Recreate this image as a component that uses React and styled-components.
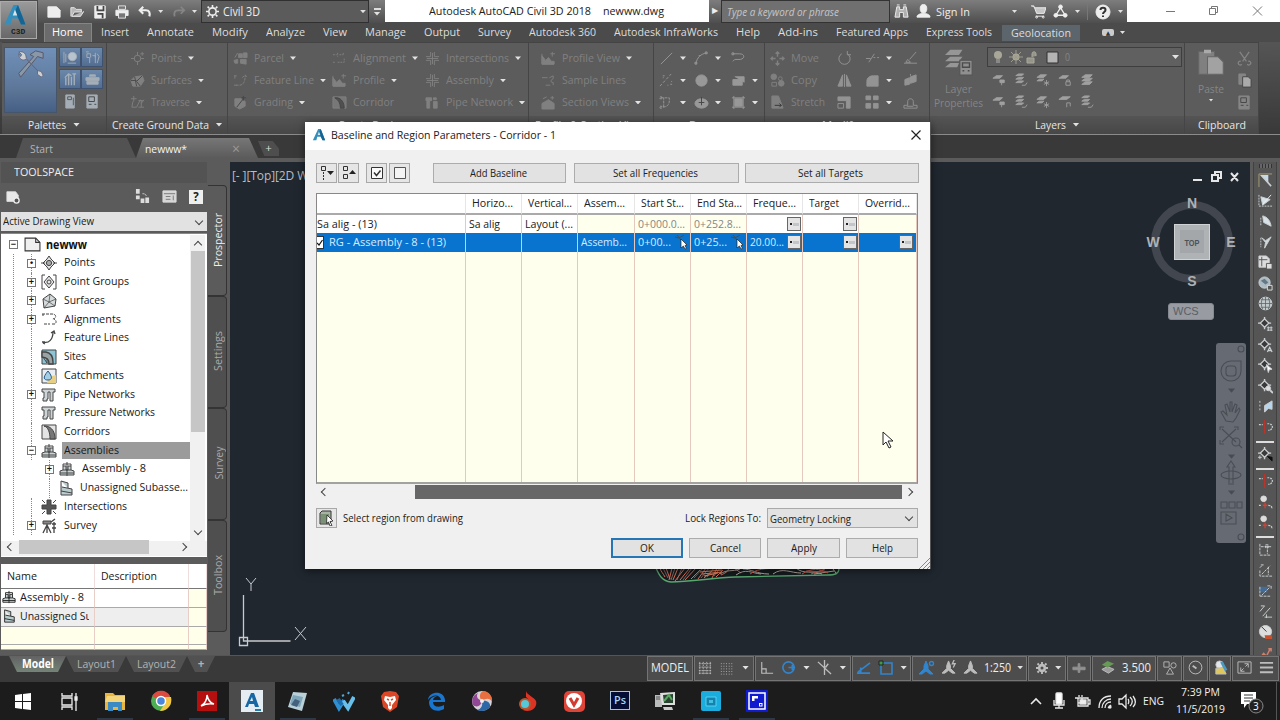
import React, { useLayoutEffect, useRef } from "react";
import styled, { createGlobalStyle, css } from "styled-components";

/* Label squeezes its text into a set width, since the UI font is narrower than Open Sans */
const Label = ({ w, children, ...rest }) => {
  const ref = useRef(null);
  useLayoutEffect(() => {
    const el = ref.current;
    el.style.transform = `scaleX(${w / parseFloat(getComputedStyle(el).width)})`;
  }, [w]);
  return (
    <LabelBox $w={w} {...rest}>
      <LabelText ref={ref}>{children}</LabelText>
    </LabelBox>
  );
};

const targetBase = <><path d="M7 0v3M7 10v3M0 6.500h3M11 6.500h3" strokeWidth="1.5" /><path d="M7 2l4.500 4.500L7 11 2.500 6.500z" fill="#3a3a3a" strokeWidth="1.400" /></>;

const icons = {
  points: <><circle cx="8" cy="8" r="3.5" /><path d="M8 1v4M8 11v4M1 8h4M11 8h4M13 1v4M11 3h4" /></>,
  surface: <><path d="M1 8l4-4 8-1 2 5-4 6H3z" fill="currentColor" /><path d="M5 4l2 10M13 3L7 9l4 5M1 8h6" stroke="#4b4b4b" /></>,
  traverse: <path d="M1 4h6M4 1v6M3 7l-1 6h5l4-8M9 6h5M9 13h6M12 6v7M12 9l3-4" />,
  parcel: <><path d="M1 10l4-1v4H2zM6 3h4v4H6zM11 2h4v5h-4zM8 9h6v5l-6-1z" fill="currentColor" /><path d="M2 7l3-5" /></>,
  feature: <path d="M2 3v3M3 13h4c4 0 6-4 6-10M10 5l3-3 2 3M1 3h3M1 13h3" strokeDasharray="3 1" />,
  grading: <><path d="M2 4h7l4 3v5l-6 3-5-3z" fill="currentColor" /><path d="M4 13l7-9M11 1v5M9 3h5" stroke="#444" /></>,
  alignment: <path d="M1 4h4M1 12h3M6 2v4M8 4h4M6 12h7M12 2v3M13 8v4" strokeDasharray="2 1" />,
  profile: <><path d="M1 14V5l4 5 3-3 3 4h3v3z" fill="currentColor" /><path d="M1 3v11h13M12 1v5M10 3h5" /></>,
  corridor: <><path d="M1 2h14v12H1z" fill="#777" /><path d="M3 3c4 2 6 6 6 11h4c0-6-3-10-7-11z" fill="#505050" stroke="#444" /></>,
  intersect: <path d="M6 1v5H1M6 15v-5H1M10 1v5h5M10 15v-5h5M8 2v12M2 8h12" />,
  assembly: <><path d="M1 10l3-1V5h3v4h2V5h3v4l3 1v4H1z" fill="#c9d3d5" /><path d="M8 1v14M4 9h8M1 12h14M4 5V3h8v2" /></>,
  pipes: <path d="M1 3h6v3H5v8H2V6H1zM9 3h3v2H9zM9 7h4v7H9z" fill="currentColor" />,
  pipe: <><path d="M1 2h13v3h-2v9H9V5H7v7H6v2H2v-3h1V5H1z" fill="#cdd5d7" /></>,
  section: <><path d="M1 9l7-4 6 4v6H1z" fill="currentColor" /><path d="M2 4l4-2M12 1v4M10 3h4" /></>,
  sample: <path d="M1 5h6M9 5l4-2v3c-3 1-3 5 0 4v3M5 13h5" />,
  line: <path d="M2 14L14 2" />,
  dashline: <path d="M1 14L13 1M4 5h1M9 13h1M13 9h1M4 3h2M12 12h2" strokeDasharray="3 2" />,
  arc: <path d="M2 14C3 7 7 3 14 2M1 12h2v2H1zM12 1h2v2h-2zM5 5h2" />,
  polyline: <path d="M2 3h7c6 0 6 5 1 6H4l-2 2M1 2h2v2H1z" />,
  curve: <path d="M2 3h9v3c0 5-3 7-8 7M1 2h2v2H1zM1 12h2v2H1zM5 13V3" strokeDasharray="3 1" />,
  circle: <circle cx="8" cy="8" r="6" fill="currentColor" />,
  ellipse: <><ellipse cx="8" cy="9" rx="7" ry="5" fill="currentColor" /><path d="M8 2v9M5 8h6" stroke="#444" /></>,
  rect: <path d="M2 7h10v6H2zM4 4h10v6" fill="currentColor" />,
  hatch: <><path d="M4 4h8v8H4z" fill="currentColor" /><path d="M1 3h14M3 1v14M1 13h14M13 1v14" /></>,
  move: <path d="M8 1v5M8 10v5M1 8h5M10 8h5M6 3l2-2 2 2M6 13l2 2 2-2M3 6L1 8l2 2M13 6l2 2-2 2" strokeWidth="1.5" />,
  copy3: <><circle cx="4" cy="4" r="3" fill="currentColor" /><circle cx="11" cy="6" r="2" /><circle cx="12" cy="11" r="3" fill="currentColor" /><path d="M2 10h5v4H2z" /></>,
  stretch: <><path d="M2 1h7l5 13H2z" fill="currentColor" /><path d="M5 11h7M10 9l2 2-2 2" stroke="#333" /></>,
  rotate: <path d="M5 3a6 6 0 1 0 6 0M11 0v4h4" />,
  mirror: <path d="M6 2v12H1zM10 2v12h5zM8 1v14" fill="currentColor" />,
  scale: <><path d="M1 2h13v12h-4V6H1z" fill="currentColor" /><path d="M1 9h6v5H1z" /></>,
  trim: <path d="M1 8h5M4 12L10 3M9 7h2M13 7h2" />,
  fillet: <path d="M2 14V9c0-4 3-6 7-6h5v11z" fill="currentColor" />,
  array: <path d="M1 1h5v4H1zM9 1h5v4H9zM1 9h5v5H1zM9 9h5v5H9z" fill="currentColor" />,
  erase: <path d="M14 1L7 9M5 9l3 3M1 13h14M5 9l-2 3h5" />,
  explode: <path d="M2 7l5-2v7l-5 1zM8 4l6-2v7l-6 2zM8 3V1" fill="currentColor" />,
  offset: <path d="M1 14h14v-3h-4V7c0-4-6-4-6 0v4H1zM4 12h7" />,
  layer: <><path d="M1 5l4-3h9l-4 3z" fill="currentColor" /><path d="M10 9v5M10 9h4v4" /></>,
  layerOne: <><path d="M1 6l4-3h7l-3 3z" fill="currentColor" /><path d="M9 8h5v3H9zM11 11v3" fill="currentColor" /></>,
  layerLock: <><path d="M1 6l4-3h7l-3 3z" fill="currentColor" /><path d="M9 10h5v4H9zM10 10V8h3v2" /></>,
  layerStar: <><path d="M1 5l4-3h7l-3 3zM1 9l3-2h5l-2 2z" fill="currentColor" /><path d="M12 8v7M9 10l6 3M15 10l-6 3" /></>,
  layerDown: <><path d="M2 3l3-2h6L9 3zM2 7l3-2h6L9 7zM2 11l3-2h6l-2 2z" fill="currentColor" /><path d="M9 14h4l2-3" /></>,
  layers: <><path d="M2 5l4-3h8l-3 3zM2 9l4-3h8l-3 3zM2 13l4-3h8l-3 3z" fill="currentColor" /></>,
  layerBig: <><path d="M0 4l3-3h7L8 4zM0 7.500l3-2.500h7L8 7.500zM0 11l3-2.500h5L7 11z" fill="currentColor" stroke="none" /><path d="M8.500 7h7v8.500h-7z" fill="#8f8f8f" stroke="#555" strokeWidth=".6" /><path d="M10 8.500h4v2.500h-4zM10 13h1M13 13h1" stroke="#4b4b4b" strokeWidth=".8" /></>,
  paste: <><path d="M1 2h9v13H1z" fill="#808080" stroke="#666" strokeWidth=".6" /><path d="M4 1h4v2H4z" fill="#aaa" stroke="none" /><path d="M6 5h6l3 3v7H6z" fill="#a2a2a2" stroke="#666" strokeWidth=".6" /></>,
  cut: <path d="M3 1l7 10M13 1L6 11M4 11a2 2 0 1 0 1 3M12 11a2 2 0 1 1-1 3" strokeWidth="1.300" />,
  copy: <><path d="M2 1h7v11H2z" fill="currentColor" /><path d="M6 4h6l3 3v8H6z" fill="#aaa" stroke="#444" /></>,
  new: <path d="M1 2h10l4 4v8H1z" fill="currentColor" />,
  open: <path d="M1 13V3h4l2 2h6v3H5l-3 5h10l4-6" fill="currentColor" fillOpacity=".6" />,
  save: <><path d="M2 1h12v14H2z" fill="currentColor" /><path d="M5 1v5h7V1M5 10h6v5" stroke="#444" strokeWidth="2" /></>,
  print: <><path d="M1 6h14v6H1z" fill="currentColor" /><path d="M4 1h8v4H4zM4 9h8v6H4z" fill="#777" /></>,
  undo: <path d="M6 2L2 6l4 4M2 6h7c4 0 5 3 4 7" strokeWidth="2.4" />,
  redo: <path d="M10 2l4 4-4 4M14 6H7C3 6 2 9 3 13" strokeWidth="2" />,
  gear: <><circle cx="8" cy="8" r="4.5" strokeWidth="2" /><path d="M8 0v3M8 13v3M0 8h3M13 8h3M2 2l2 2M12 12l2 2M14 2l-2 2M4 12l-2 2" strokeWidth="2" /></>,
  gearSolid: <><circle cx="8" cy="8" r="3.800" strokeWidth="3.500" /><path d="M8 0v3M8 13v3M0 8h3M13 8h3M2 2l2 2M12 12l2 2M14 2l-2 2M4 12l-2 2" strokeWidth="2.500" /></>,
  binoculars: <path d="M3 3h3v3h4V3h3l2 11h-5V9H6v5H1zM3 1h3M10 1h3" fill="currentColor" fillOpacity=".55" />,
  person: <><ellipse cx="8" cy="5" rx="3.5" ry="4.5" fill="currentColor" /><path d="M1 14c0-3 3-3 5-4h4c2 1 5 1 5 4z" fill="currentColor" /></>,
  cart: <><path d="M0 2h3l3 8h8l2-6H4" fill="currentColor" fillOpacity=".7" /><path d="M5 13h9" /><circle cx="6" cy="14" r="1" /><circle cx="13" cy="14" r="1" /></>,
  triangle: <><path d="M8 4L3 12h10z" strokeWidth="1.500" /><circle cx="8" cy="3" r="2" fill="currentColor" /><circle cx="3" cy="12" r="2" fill="currentColor" /><circle cx="13" cy="12" r="2" fill="currentColor" /></>,
  help: <><circle cx="8" cy="8" r="7" fill="#eee" /><path d="M5.5 6c0-3 5-3 5 0 0 2-2.5 2-2.5 4M8 11.5v1.5" stroke="#333" strokeWidth="2" /></>,
  wrench: <><path d="M8 3l3-2 4 1v3l-3-1-9 11-1-2 8-9z" fill="#8998a8" stroke="#556" strokeWidth=".5" /><path d="M2 2.500c0 3 2 4 4 3l6 6 0 2 2 1.500 1-1-1-2-2-.5-6-6.500c0-2-1-4-4-3.500l1.500 1.500-.5 1z" fill="#ccd0d3" stroke="#667" strokeWidth=".5" /></>,
  prospector: <><circle cx="10" cy="7" r="4.5" fill="#b9c3cd" /><path d="M1 2v12M3 4v9M5 14h9" /></>,
  survey: <path d="M2 4v4h3v6M2 4h4v4M8 6h3v8M11 3v5M13 4l2 3-2 7M1 2h3" />,
  tools: <path d="M2 6l4-4 3 2M6 3v11M9 5v9M12 2v12M10 2h4M3 6v8" strokeWidth="1.5" />,
  toolbox: <path d="M1 6h14v3H1zM2 10h12v3H2zM5 5V3h6v2" fill="currentColor" />,
  calc: <><path d="M3 1h9v14H3z" fill="currentColor" /><path d="M5 3h4v3H5zM11 4v8" stroke="#555" /></>,
  props: <><path d="M2 1h11v14H2z" fill="currentColor" /><path d="M4 3h6v5H4zM4 11h3M10 11h2" stroke="#444" /></>,
  page: <><path d="M1 2h10l4 4v8H1z" fill="#efefef" /><path d="M11 2v4h4" /></>,
  pageGo: <><path d="M1 2h10l3 4v7H1z" fill="#e8e8e8" /><circle cx="12" cy="12" r="3" fill="#555" stroke="#eee" strokeWidth="1.500" /></>,
  treeView: <><path d="M1 0h4v5H1zM1 7h4v4H1zM6 10h4v5H6zM11 9h4v6h-4z" fill="currentColor" stroke="none" /><path d="M8 5c3 0 4 1 4 3" strokeDasharray="2 1" /></>,
  panorama: <><path d="M1 2h14v12H1z" fill="#d5d5d5" /><path d="M2 5h12M4 8h5M4 11h5M12 7v5" stroke="#777" /></>,
  tpoint: <><path d="M8 1l2 3 4 4-4 4-2 3-2-3-4-4 4-4z" fill="#e4e4e4" /><circle cx="8" cy="8" r="2.6" fill="#aaa" /><path d="M0 8h4M12 8h4" /></>,
  tgroup: <><path d="M4 1H1v14h3M12 1h3v14h-3" /><path d="M8 2l5 6-5 6-5-6z" fill="#e4e4e4" /><circle cx="8" cy="8" r="2" /></>,
  tsurface: <><path d="M2 6l7-5 6 5-1 7-11 2z" fill="#d5dadb" /><path d="M2 6l6 3 7-3M9 1L8 9l-5 6M8 9l6 4" strokeWidth=".7" /></>,
  talign: <path d="M1 2h10c5 0 5 5 0 5M1 3h2M3 12h6M11 12h3c2-2 1-4-1-5" strokeDasharray="3 1" />,
  tfeature: <path d="M2 12c6 2 10-3 10-10M10 3l3-2 1 3M1 12h3M4 14l-2-1" strokeWidth="1.3" />,
  tsites: <><path d="M1 1h14v14H1z" fill="#8dc4d6" /><path d="M1 3h4c5 1 7 5 7 10v2H8c0-4-1-6-7-7z" fill="#9aa3a3" strokeWidth="1.400" /><path d="M2 8l4 6M6 9v5" /></>,
  tcatch: <><path d="M1 1h14v14H1z" fill="#e8eef1" /><path d="M8 9l7-2v8H6z" fill="#e8cf86" stroke="none" /><path d="M7 3c-6 7-4 9 0 9s5-3 0-9z" fill="#a5cde4" stroke="#245a86" /></>,
  tcorridor: <><path d="M1 1h14v14H1z" fill="#e4e4e4" /><path d="M3 2c4 1 6 6 6 13h5C14 8 11 3 5 2z" fill="#777" /></>,
  tsub: <><path d="M3 1v14h11V9L4 7M3 1l7 2v5M3 11l11 2" fill="#b9cccf" /></>,
  tinter: <><path d="M6 1v5H1v4h5v5h4v-5h5V6h-5V1z" fill="#555" /><path d="M1 1l3 3M15 1l-3 3M1 15l3-3M15 15l-3-3" /></>,
  tsurvey: <><path d="M2 3h8v3H2z" fill="#888" /><path d="M10 4l4-3M6 6v9M6 7l-4 8M6 7l4 8M13 4v11M11 6h4M11 10h4" strokeWidth="1.3" /></>,
  clock: <><circle cx="8" cy="8" r="6.8" /><path d="M9 9L5 6" strokeWidth="2" /></>,
  grid: <path d="M2 1v14M6 1v14M10 1v14M14 1v14M1 3h14M1 7h14M1 11h14M1 14h14" strokeDasharray="2 1" />,
  snapdots: <path d="M1 3h14M1 6h14M1 9h14M1 12h14M1 15h14" strokeDasharray="1 2" />,
  ortho: <path d="M2 1v13h13M2 9h5v5" strokeWidth="1.3" />,
  polar: <><circle cx="8" cy="8" r="6" strokeWidth="1.8" /><path d="M8 8h7M12 5v6" strokeWidth="1.6" /></>,
  iso: <path d="M1 2l14 13M8 0v16M12 4l-3 4" strokeWidth="1.4" />,
  otrack: <path d="M1 14h14M2 13L15 3M5 8v6" strokeWidth="1.8" />,
  osnap: <><path d="M3 3h11v11H3z" strokeWidth="1.6" /><path d="M1 1h4v4H1z" fill="#3f9b46" stroke="#222" /></>,
  scaleicon: <path d="M8 1l2 5v3l5 5h-3l-4-3-4 3H1l5-5V6z" fill="currentColor" />,
  scaleAuto: <><path d="M7 1l2 5v3l5 5h-3l-4-3-4 3H0l5-5V6z" fill="currentColor" /><circle cx="12.500" cy="3.500" r="2" strokeWidth="1.400" /></>,
  scaleFlash: <><path d="M7 1l2 5v3l5 5h-3l-4-3-4 3H0l5-5V6z" fill="currentColor" /><path d="M13 0l-2 4h3l-2 4" strokeWidth="1.400" /></>,
  cross: <path d="M7 3h2v4h6v3H9v3H7v-3H1V7h6z" fill="currentColor" />,
  stack: <><path d="M2 10l6-3 7 3-6 4z" fill="#9b9b9b" /><path d="M2 5l6-4 7 3-7 4z" fill="#669a55" stroke="none" /></>,
  shapes: <><path d="M1 1h6v6H1zM8 8l4 7H4z" /><circle cx="12" cy="5" r="3" /></>,
  perf: <><circle cx="7" cy="5" r="4" fill="#e3e5ea" /><path d="M3 9l8-1 3 7H3z" fill="#dfc85b" /><path d="M9 2l5 9" stroke="#4c9ac2" strokeWidth="3" /></>,
  expand: <path d="M1 2h14v12H1zM4 8v4h4M12 8V4H8M4 12l3-3M12 4L9 7" />,
  menu: <path d="M1 3h14M1 8h14M1 13h14" strokeWidth="2" />,
  targetNumber: <>{targetBase}<path d="M11 10v5M14 10v5M9.500 11.500h6M9.500 14h6" /></>,
  targetLabel: <>{targetBase}<path d="M10 15l2.500-5 2.500 5M11 13.500h3" strokeWidth="1.300" /></>,
  targetPick: <>{targetBase}<path d="M9 7l6 5-3 .5-1 3z" fill="#fff" /></>,
  targetFind: <>{targetBase}<circle cx="11" cy="10" r="2.500" fill="#ddd" /><path d="M13 12l3 3" strokeWidth="2" /></>,
  targetAll: <>{targetBase}<path d="M2 9v4M0 11h4" /><path d="M10 10l5 5v-4z" fill="#111" stroke="#111" /></>,
  tri1: <><path d="M1 1h14M1 1v14" stroke="#a79f75" /><path d="M2 2h9v8z" fill="#c4dae9" stroke="none" /><path d="M4 3l10 11" strokeWidth="1.6" /></>,
  tri2: <><path d="M1 14h14M1 2v12" strokeDasharray="2 1" /><path d="M3 4l10 3-8 6z" fill="#d7e2e8" /><path d="M5 12L14 2" stroke="#eee" /></>,
  fan: <><path d="M3 4v9" strokeDasharray="2 1" /><path d="M5 2c5 1 8 5 9 11L6 9z" fill="#d7e2e8" /></>,
  ycut: <><path d="M3 3v10" strokeDasharray="2 1" /><path d="M4 3l4 3 6-4-7 12 1-6z" fill="#d2d9dd" /></>,
  sheet: <><path d="M1 1h8l3 3v9H1z" fill="#dcdcdc" /><path d="M4 2v10M1 5h9M9 9h6v6H9z" stroke="#555" fill="#ddd" /></>,
  globe: <><circle cx="8" cy="8" r="6.8" fill="#c3c9ca" /><path d="M1 8h14M8 1v14M3 4h10M3 12h10M5 2c-2 4-2 8 0 12M11 2c2 4 2 8 0 12" stroke="#526069" strokeWidth=".8" /></>,
  globe2: <><circle cx="7" cy="7" r="6" fill="#adbac2" /><path d="M3 5l4-2 4 4-3 2z" fill="#637885" stroke="none" /><path d="M10 10h5v5h-5z" fill="#555" stroke="#ddd" /></>,
  flag: <><path d="M2 2v12" strokeDasharray="2 2" /><path d="M7 7l8-5v9l-4-1-4 4z" fill="#b7d5ec" /></>,
  redcurve: <><path d="M7 0v15M5 4h4" stroke="#b8352c" strokeWidth="1.300" /><path d="M1 5h4M10 4h2c5 1 4 7-1 7" strokeDasharray="2 1" strokeWidth="1.300" /></>,
  redpoint: <><circle cx="6" cy="4" r="3" fill="#ddd" stroke="#ddd" /><path d="M5 11h5M7.500 8v6" stroke="#d14134" strokeWidth="1.500" /><path d="M1 11h3M11 11c3 0 4 2 4 4" strokeDasharray="2 1" strokeWidth="1.300" /></>,
  dims: <path d="M2 2v12h12M10 4v9M3 5h11M8 3h3v3H8z" strokeDasharray="3 1" />,
  dims2: <path d="M2 8v6h13M2 5l3-3M4 12l9-9M11 4v9M3 2h3" strokeDasharray="3 1" />,
  dims3: <><path d="M2 3h8v6H2z" fill="#436b96" stroke="none" /><path d="M2 13h12M2 3v10M4 12l9-9M10 2h4v4" strokeDasharray="3 1" /></>,
  measure: <path d="M2 8l5-6M5 13L13 4M7 14h8M9 11v4M3 2h4" />,
  sphere: <><circle cx="8" cy="7" r="6.5" fill="#ddd" /><path d="M4 2l5 5" stroke="#333" /><path d="M7 11h8v4H8z" fill="#c6512c" stroke="none" /></>,
  last: <path d="M3 13l3-4 3 3 4-8M11 4h3v3" stroke="#d17f6b" strokeWidth="1.6" />,
  logo: <><path d="M1 14L7 1h3l5 13h-3l-2-4H6l-1 4z" fill="#328fbe" stroke="none" /><path d="M10 1l5 13h-3L8 5z" fill="#166494" stroke="none" /><path d="M6.5 8h3L8 4z" fill="#d9e4e8" stroke="none" /></>,
};

const Icon = ({ n, s = 14 }) => (
  <Glyph viewBox="0 0 16 16" $s={s} aria-hidden="true">{icons[n]}</Glyph>
);

const ribbonTabs = [
  ["Home", 31], ["Insert", 28], ["Annotate", 47], ["Modify", 36], ["Analyze", 39], ["View", 24],
  ["Manage", 41], ["Output", 36], ["Survey", 33], ["Autodesk 360", 67], ["Autodesk InfraWorks", 104],
  ["Help", 24], ["Add-ins", 40], ["Featured Apps", 72], ["Express Tools", 66], ["Geolocation", 60],
];

const ground = [["points", "Points", 31, 1], ["surface", "Surfaces", 41, 1], ["traverse", "Traverse", 39, 1]];
const design1 = [["parcel", "Parcel", 30, 1], ["feature", "Feature Line", 60, 1], ["grading", "Grading", 39, 1]];
const design2 = [["alignment", "Alignment", 53, 1], ["profile", "Profile", 32, 1], ["corridor", "Corridor", 41]];
const design3 = [["intersect", "Intersections", 63, 1], ["intersect", "Assembly", 48, 1], ["pipes", "Pipe Network", 67, 1]];
const views = [["profile", "Profile View", 58, 1], ["sample", "Sample Lines", 64], ["section", "Section Views", 67, 1]];
const modify = [["move", "Move", 28], ["copy3", "Copy", 26], ["stretch", "Stretch", 34]];

const tree = [
  ["tpoint", "Points", 31, "+"], ["tgroup", "Point Groups", 65, "+"], ["tsurface", "Surfaces", 41, "+"],
  ["talign", "Alignments", 57, "+"], ["tfeature", "Feature Lines", 65], ["tsites", "Sites", 22],
  ["tcatch", "Catchments", 60], ["pipe", "Pipe Networks", 71, "+"], ["pipe", "Pressure Networks", 91],
  ["tcorridor", "Corridors", 46], ["assembly", "Assemblies", 55, "−"], ["assembly", "Assembly - 8", 64, "+", 1],
  ["tsub", "Unassigned Subasse...", 108, "", 1], ["tinter", "Intersections", 63], ["tsurvey", "Survey", 33, "+"],
];

const sideTabs = [["Prospector", 54, 111], ["Settings", 40, 112], ["Survey", 33, 112], ["Toolbox", 40, 112]];

const toolIcons = [
  "tri1", "tri2", "fan", "ycut", "sheet", "globe2", "globe", "targetNumber", "targetLabel", "targetPick",
  "targetFind", "flag", "redcurve", "|", "targetAll", "|", "redcurve", "redpoint", "redpoint", "|", "dims",
  "dims2", "dims3", "measure", "sphere", "last",
];

const ToolColumn = ({ rows, x }) => (
  <ToolStack $x={x}>
    {rows.map(([icon, label, w, arrow]) => (
      <ToolRow key={label}>
        <Icon n={icon} s={15} />
        <Label w={w}>{label}</Label>
        {arrow && <Arrow />}
      </ToolRow>
    ))}
  </ToolStack>
);

const IconColumn = ({ names, w, arrows = [] }) => (
  <IconStack $w={w}>
    {names.map((n, i) => (
      <IconRow key={i}>
        <Icon n={n} s={15} />
        {arrows[i] ? <Arrow /> : null}
      </IconRow>
    ))}
  </IconStack>
);

const TitleBar = () => (
  <TitleRow>
    <Quick>
      <Icon n="new" /><Icon n="open" /><Icon n="save" /><Icon n="print" />
      <QuickPair><Icon n="undo" /><Arrow $s={5} /></QuickPair>
      <QuickPair $dim><Icon n="redo" /><Arrow $s={5} /></QuickPair>
    </Quick>
    <WorkspacePicker>
      <Icon n="gear" s={13} />
      <Label w={37}>Civil 3D</Label>
      <Spacer />
      <Arrow />
    </WorkspacePicker>
    <QuickMore><MoreLine /><Arrow $s={7} /></QuickMore>
    <Caption>
      <Label w={162}>Autodesk AutoCAD Civil 3D 2018</Label>
      <Label w={61}>newww.dwg</Label>
    </Caption>
    <SearchToggle>▶</SearchToggle>
    <Search><Label w={112}>Type a keyword or phrase</Label></Search>
    <Account>
      <Icon n="binoculars" s={15} /><Icon n="person" s={15} />
      <Label w={34}>Sign In</Label>
      <Spacer />
      <Arrow $s={5} /><CartGap /><Icon n="cart" s={15} /><Icon n="triangle" s={15} /><Arrow $s={5} />
      <Divider /><Icon n="help" s={16} /><Arrow $s={5} />
    </Account>
    <WindowButtons>
      <svg width="110" height="14" fill="none" stroke="#777">
        <path d="M8 7.5h9M51.500 4.500h6v6h-6zM53.500 4v-1.500h6v6h-2M95 2.500l9 9M104 2.500l-9 9" />
      </svg>
    </WindowButtons>
  </TitleRow>
);

const Ribbon = () => (
  <RibbonRow>
    <Panel $w={105}>
      <PanelBody>
        <BigPalette><Icon n="wrench" s={30} /></BigPalette>
        <PaletteGrid>
          {["prospector", "survey", "tools", "toolbox", "calc", "props"].map((n, i) => (
            <PaletteButton key={n} $on={i < 4}><Icon n={n} s={15} /></PaletteButton>
          ))}
        </PaletteGrid>
      </PanelBody>
      <PanelTitle><Label w={38}>Palettes</Label><Arrow $s={7} /></PanelTitle>
    </Panel>
    <Panel $w={121}>
      <PanelBody><ToolColumn rows={ground} x={23} /></PanelBody>
      <PanelTitle><Label w={97}>Create Ground Data</Label><Arrow $s={7} /></PanelTitle>
    </Panel>
    <Panel $w={301}>
      <PanelBody>
        <ThreeColumns>
          <ToolColumn rows={design1} x={5} />
          <ToolColumn rows={design2} x={5} />
          <ToolColumn rows={design3} x={3} />
        </ThreeColumns>
      </PanelBody>
      <PanelTitle><Label w={67}>Create Design</Label><Arrow $s={7} /></PanelTitle>
    </Panel>
    <Panel $w={125}>
      <PanelBody><ToolColumn rows={views} x={12} /></PanelBody>
      <PanelTitle><Label w={113}>Profile &amp; Section Views</Label></PanelTitle>
    </Panel>
    <Panel $w={111}>
      <PanelBody>
        <DrawTools>
          <IconColumn names={["line", "dashline", "curve"]} w={35} arrows={[1, 1, 1]} />
          <IconColumn names={["arc", "circle", "ellipse"]} w={37} arrows={[1, 1, 1]} />
          <IconColumn names={["polyline", "rect", "hatch"]} w={35} arrows={[0, 1, 1]} />
        </DrawTools>
      </PanelBody>
      <PanelTitle><Label w={27}>Draw</Label><Arrow $s={7} /></PanelTitle>
    </Panel>
    <Panel $w={165}>
      <PanelBody>
        <ModifyTools>
          <ToolColumn rows={modify} x={5} />
          <IconColumn names={["rotate", "mirror", "scale"]} w={28} />
          <IconColumn names={["trim", "fillet", "array"]} w={38} arrows={[1, 1, 1]} />
          <IconColumn names={["erase", "explode", "offset"]} w={20} />
        </ModifyTools>
      </PanelBody>
      <PanelTitle><Label w={36}>Modify</Label><Arrow $s={7} /></PanelTitle>
    </Panel>
    <Panel $w={255}>
      <PanelBody>
        <BigTool $w={57}>
          <Icon n="layerBig" s={28} />
          <Label w={27}>Layer</Label><Label w={49}>Properties</Label>
        </BigTool>
        <LayerTools>
          <LayerPicker>
            <svg width="66" height="15" viewBox="0 0 66 15" fill="none">
              <circle cx="5" cy="5" r="4" fill="#a9a797" /><path d="M3 9h4v4H3z" fill="#898989" />
              <circle cx="23" cy="7" r="3.500" fill="#aaa995" /><path d="M23 0v14M16 7h14M18 2l10 10M28 2L18 12" stroke="#9c9b8c" />
              <path d="M34 8h7v5h-7zM39 7V4c0-3 4-3 4 0v2" stroke="#aaa89a" fill="#96958c" />
              <path d="M54 2h11v11H54z" fill="#b4b4b4" stroke="#303030" />
            </svg>
            <Label w={5}>0</Label><Spacer /><Arrow $s={7} />
          </LayerPicker>
          <LayerGrid>
            {["layerOne", "layerDown", "layerStar", "layerLock", "layers", "layerOne", "layerDown", "layerStar", "layer", "layerDown"].map((n, i) => (
              <Icon key={i} n={n} s={14} />
            ))}
          </LayerGrid>
        </LayerTools>
      </PanelBody>
      <PanelTitle><Label w={31}>Layers</Label><Arrow $s={7} /></PanelTitle>
    </Panel>
    <Panel $w={74}>
      <PanelBody>
        <BigTool $w={52}>
          <Icon n="paste" s={28} />
          <Label w={26}>Paste</Label><Arrow $s={4} />
        </BigTool>
        <IconColumn names={["cut", "copy", "props"]} w={18} />
      </PanelBody>
      <PanelTitle><Label w={48}>Clipboard</Label></PanelTitle>
    </Panel>
  </RibbonRow>
);

const TreeNode = ({ row: [icon, label, w, sign, deep] }) => (
  <TreeRow $deep={deep}>
    <Branch>{sign && <Toggle>{label === "Points" ? "•" : sign}</Toggle>}</Branch>
    <Icon n={icon} s={16} />
    <TreeText $active={label === "Assemblies"} $deep={deep}><Label w={w}>{label}</Label></TreeText>
  </TreeRow>
);

const Toolspace = () => (
  <Space>
    <SpaceTitle><Label w={60}>TOOLSPACE</Label></SpaceTitle>
    <SpaceTools>
      <Icon n="pageGo" s={14} /><Spacer /><Icon n="treeView" s={15} /><Icon n="panorama" s={15} /><HelpBox>?</HelpBox>
    </SpaceTools>
    <ViewPicker>
      <Label w={91}>Active Drawing View</Label>
      <Chevron $dir="down" />
    </ViewPicker>
    <Tree>
      <TreeTop>
        <TreeList>
          <RootRow><Toggle>−</Toggle><Icon n="page" s={17} /><Label w={41}>newww</Label></RootRow>
          <TreeBranches>
            {tree.map((row) => <TreeNode key={row[1]} row={row} />)}
          </TreeBranches>
        </TreeList>
        <VScroll><Chevron $dir="up" $bold /><VThumb /><Spacer /><Chevron $dir="down" $bold /></VScroll>
      </TreeTop>
      <TreeBottom><Chevron $dir="left" $bold /><HThumb /><Chevron $dir="right" $bold /></TreeBottom>
    </Tree>
    <ItemTable>
      <ItemHead><Label w={30}>Name</Label></ItemHead><ItemHead><Label w={56}>Description</Label></ItemHead><ItemHead />
      <ItemCell><Icon n="assembly" s={14} /><Label w={64}>Assembly - 8</Label></ItemCell><ItemCell /><ItemCell $cream />
      <ItemCell $gray><Icon n="tsub" s={14} /><NameClip><Label w={72}>Unassigned Su</Label></NameClip></ItemCell><ItemCell $gray /><ItemCell $cream />
      <ItemCell $cream /><ItemCell $cream /><ItemCell $cream />
      <ItemCell $cream /><ItemCell $cream /><ItemCell $cream />
    </ItemTable>
  </Space>
);

const Canvas = () => (
  <Drawing>
    <ViewLabel>[- ][Top][2D Wireframe]</ViewLabel>
    <ViewControls>
      <svg width="48" height="12" fill="none" stroke="#e6e6e6" strokeWidth="2">
        <path d="M0 9h9M19 4h6v6h-6zM22 3V1h6v6h-2M38 2l7 8M45 2l-7 8" />
      </svg>
    </ViewControls>
    <Cube>
      <svg width="94" height="94" viewBox="0 0 94 94">
        <circle cx="47" cy="47" r="37" fill="none" stroke="#42474f" strokeWidth="8" />
        <rect x="29.500" y="29.500" width="35" height="35" fill="#afb3b6" stroke="#d0d3d4" />
        <rect x="35" y="35" width="24" height="23" fill="#a3a7aa" />
        <g fill="#aeb1b4" stroke="none" textAnchor="middle" fontFamily="Liberation Sans" fontWeight="700" fontSize="14">
          <text x="47" y="13">N</text><text x="47" y="91">S</text><text x="8" y="52">W</text><text x="86" y="52">E</text>
          <text x="47" y="51" fill="#4c5257" fontSize="9" textLength="15" lengthAdjust="spacingAndGlyphs">TOP</text>
        </g>
      </svg>
    </Cube>
    <Wcs>WCS</Wcs>
    <NavBar>
      <svg width="30" height="200" viewBox="0 0 30 200" fill="none" stroke="#494e55" strokeWidth="1.100">
        <path d="M15 18h10v10a10 10 0 1 1-10-10z" /><rect x="10" y="23" width="10" height="10" rx="3" /><circle cx="25" cy="6" r="3" />
        <path d="M13 46h5l-2.500 3zM13 112h5l-2.500 3zM13 148h5l-2.500 3z" fill="#444950" />
        <path d="M10 78l-5-9 2-1 4 4-2-10 2-1 3 8v-10h2v10l3-8 2 1-2 8 4-5 1 2-4 8-3 4z" />
        <path d="M6 86l14 13M20 86L6 99M4 87v-3h4M18 84h4v3M4 97v4h4" /><circle cx="20" cy="99" r="4" /><path d="M23 102l3 3" />
        <ellipse cx="15" cy="132" rx="10" ry="4" /><path d="M13 140v-16l-2 0 4-6 4 6h-2v16M12 141h6" />
        <path d="M5 159h6v6H5zM13 159h6v6h-6zM21 159h5v6h-5zM5 169h15v12H5zM10 171v7l6-3z" /><circle cx="25" cy="194" r="3" />
      </svg>
    </NavBar>
    <Contour>
      <svg width="190" height="20" viewBox="0 0 190 20" fill="none">
        <path d="M2 0c3 7 6 13 15 14 18 0 42-4 64-5l92-2c8 0 12-1 12-7" fill="#151c1e" stroke="#58a870" strokeWidth="1.400" />
        <path d="M6 0c1 4 3 5 5 9M12 0l4 11M18 0l-3 12M24 0l-5 12M31 0L21 13M35 1l-9 11M42 0l-11 12M46 2l-9 9M52 0l-8 11M58 3l-8 7M63 0l-5 10M69 2l-7 7M75 0c-1 4-4 5-8 7M80 0l7 5" stroke="#e07260" />
        <path d="M9 0l5 10M21 0l-4 12M28 0l-5 12M38 0l-9 12M49 0l-9 10M55 0l-8 10M60 0l-7 9M66 0l-6 8" stroke="#9f776f" strokeWidth=".8" />
        <path d="M46 4l22-2M48 6l20-2M50 8l14-3" stroke="#f08460" />
        <path d="M66 6c7-5 12-2 20-5M82 7c10-7 15-2 25-1M89 1c8 0 14 5 26 5M119 6c9-7 18-1 28-1M142 0c8 7 17 2 26 6M160 6l20-3M179 1l3 4" stroke="#b9aaa4" />
        <path d="M96 6c10-7 20-5 31-6M148 6c9-6 18-6 26-1M152 3l22 1M157 6l14-5" stroke="#d45d4d" />
      </svg>
    </Contour>
    <Ucs>
      <svg width="78" height="76" viewBox="0 0 78 76" fill="none" stroke="#c8cbce">
        <path d="M8.500 21v46h47M4.500 63.500h8v8h-8z" strokeWidth="1.300" />
        <path d="M11 4l5 6 5-6M16 10v7M60 53l11 13M71 53L60 66" />
      </svg>
    </Ucs>
  </Drawing>
);

const StatusBar = () => (
  <Status>
    <StatusBox $w={46}><Label w={38}>MODEL</Label></StatusBox>
    <StatusBox $w={61}><Icon n="grid" /><Icon n="snapdots" /><Arrow $s={7} /></StatusBox>
    <StatusBox $w={97}><Icon n="ortho" /><Blue><Icon n="polar" s={15} /></Blue><Arrow $s={7} /><Icon n="iso" s={15} /><Arrow $s={7} /></StatusBox>
    <StatusBox $w={60}><Blue><Icon n="otrack" s={15} /></Blue><Blue><Icon n="osnap" s={16} /></Blue><Arrow $s={7} /></StatusBox>
    <StatusBox $w={116} $x={3}>
      <Blue><Icon n="scaleAuto" s={16} /></Blue><Icon n="scaleFlash" s={15} /><Icon n="scaleicon" s={15} />
      <Label w={27}>1:250</Label><Arrow $s={6} />
    </StatusBox>
    <StatusBox $w={38} $x={4}><Icon n="gearSolid" s={12} /><Arrow $s={7} /></StatusBox>
    <StatusBox $w={24} $dim><Icon n="cross" s={14} /></StatusBox>
    <StatusBox $w={65} $x={3}><Icon n="stack" s={15} /><Label w={29}>3.500</Label></StatusBox>
    <StatusBox $w={25}><Icon n="shapes" /></StatusBox>
    <StatusBox $w={25}><Icon n="clock" s={15} /></StatusBox>
    <StatusBox $w={23}><Icon n="perf" s={15} /></StatusBox>
    <StatusBox $w={47}><Icon n="expand" s={15} /><Icon n="menu" s={15} /></StatusBox>
  </Status>
);

const appIcons = [
  <path d="M3 5l7-1v7H3zM11 4l8-1v8h-8zM3 12h7v7l-7-1zM11 12h8v8l-8-1z" fill="#fff" />,
  <g fill="none" stroke="#eee" strokeWidth="1.300"><path d="M4 8h10v7H4zM4 3v3h10V3M4 20v-3h10v3M18 3v18" /><path d="M17 7h2v3h-2z" fill="#eee" /></g>,
  <g><path d="M1 3h8l2 2h10v15H1z" fill="#e8b53f" /><path d="M3 6h18v6H1z" fill="#f4d57b" /><path d="M4 12h14v9h-4v-4H9v4H4z" fill="#3b8ac4" /></g>,
  <g><circle cx="11" cy="11" r="10" fill="#4eae53" /><path d="M11 11L2 6C7-2 17 0 20 6z" fill="#dc4b3f" /><path d="M11 7h10c2 8-4 14-11 14l5-8z" fill="#f3c646" /><circle cx="11" cy="11" r="4.500" fill="#4a86db" stroke="#fff" strokeWidth="1.500" /></g>,
  <g><rect x="1" y="1" width="20" height="20" fill="#b60f0f" /><path d="M5 16c5-3 6-7 6-11 1 5 3 8 7 9-5-1-9 0-13 2" fill="none" stroke="#fff" strokeWidth="1.500" /></g>,
  <g><rect width="22" height="22" fill="#e5edf2" /><path d="M4 17L10 3h3l5 14h-4l-1-3H8l-1 3zM9 11h3l-1-4z" fill="#1767a4" /><path d="M14 20h6" stroke="#277da9" strokeWidth="2" /></g>,
  <g><path d="M6 2l14 1-5 18L1 17z" fill="#b9d0d8" /><path d="M6 5l10 2-3 10-10-3z" fill="#7fa5bb" /><path d="M8 9l5 2-3 6-6-2z" fill="#44627c" /></g>,
  <g fill="none" strokeWidth="4"><path d="M1 9l5 9 5-8" stroke="#2f8fd0" /><path d="M10 11l5 7 6-11" stroke="#67bfea" /><path d="M5 9l4 6" stroke="#1d6cae" /><path d="M9 6l2-1M15 4l1-2" stroke="#4ba9dc" strokeWidth="2" /></g>,
  <g><path d="M5 2l6-1 6 1 3 4-2 11-7 5-7-5L2 6z" fill="#dc4827" /><path d="M6 6l5 1 5-1 1 4-4 5v3l-2 2-2-2v-3l-4-5z" fill="#fff" /><path d="M8 9l2 1M14 9l-2 1M11 12v4" stroke="#dc4827" strokeWidth="1.500" /></g>,
  <path d="M3 10C4 1 19 0 20 10v2H8c0 5 6 6 11 3v4c-7 4-15 1-15-7 1-4 5-6 8-6-3 1-4 3-4 4h8c-1-6-9-6-13 0z" fill="#1876cf" />,
  <g><circle cx="11" cy="11" r="10" fill="#d8d2d6" /><path d="M11 11C8 8 8 2 13 1c5 1 9 5 8 11-2-4-6-4-10-1z" fill="#e86f40" /><path d="M11 11c5-1 9 2 8 6-3 4-9 5-13 3 4-1 6-4 5-9z" fill="#2c67a8" /><path d="M11 11c-1 5-5 7-9 4-2-5 0-10 5-12-2 3-1 6 4 8z" fill="#924796" /><circle cx="11" cy="11" r="2" fill="#eee" /></g>,
  <g><path d="M9 1c1 4 8 6 10 10 2 7-6 12-13 9 9-2 9-9 3-13z" fill="#dc3424" /><circle cx="8" cy="14" r="6" fill="#bb552e" /><circle cx="8" cy="14" r="4" fill="#55c8d9" /></g>,
  <g><rect x="1" y="1" width="21" height="21" rx="5" fill="#df4439" /><circle cx="11" cy="11" r="8" fill="#fff" /><path d="M7 8l4 7 4-7" fill="none" stroke="#d13b31" strokeWidth="3" /></g>,
  <g><rect x="1.500" y="1.500" width="19" height="18" fill="#060e35" stroke="#a9c4e0" /><text x="5" y="14" fill="#a8d4f1" fontSize="10" fontFamily="Open Sans" fontWeight="600" textLength="12" lengthAdjust="spacingAndGlyphs">Ps</text></g>,
  <g><path d="M1 5h7v12H1z" fill="#b9bcbb" /><path d="M2 7h4M2 9h4" stroke="#555" /><path d="M6 3l15-1v13H8z" fill="#ddd" /><path d="M9 5l10-1v9H10z" fill="#28432f" /><path d="M10 11l5-6 3 5" stroke="#58a65f" strokeWidth="2" fill="none" /><path d="M9 17h9l1 3h-9z" fill="#ccc" /></g>,
  <g><rect x="1" y="1" width="20" height="20" rx="2" fill="#1badde" /><path d="M6 7h10v9H6z" fill="#1681ad" stroke="#55d3f1" /><path d="M9 10h4v3H9z" fill="#43bfdf" /></g>,
  <g><rect width="22" height="22" fill="#101acf" /><path d="M3 3h16v16H3z" fill="none" stroke="#fff" strokeWidth="1.500" /><path d="M6 6h6v5H6zM13 13h3.500v3.500h-3.500z" fill="#fff" /><path d="M8.500 8.500h3.500v2.500h-3.500zM14 14h1.500v1.500h-1.500z" fill="#101acf" /></g>,
];

const Taskbar = () => (
  <Task>
    {appIcons.map((art, i) => (
      <TaskItem key={i} $active={i === 5} $open={[2, 4, 6, 15, 16].includes(i)}>
        <svg width="22" height="22" viewBox="0 0 22 22">{art}</svg>
      </TaskItem>
    ))}
    <Spacer />
    <Tray>
      <svg width="108" height="20" viewBox="0 0 108 20" fill="none" stroke="#e9e9e9" strokeWidth="1.300">
        <path d="M2 13l5-5 5 5" strokeWidth="1.600" />
        <rect x="27" y="2" width="6" height="11" rx="1" fill="#fff" /><path d="M25 9v5h10V9M30 14v3M26 17h8" />
        <path d="M49 7h10v8H49zM59 9h2v4h-2M50 6V4M53 6V4M46 7h7v2c0 2-2 3-4 3" /><path d="M51 9h6v4h-6z" fill="#eee" />
        <path d="M70 17C70 9 75 5 82 5M73 17c0-5 4-9 9-9M76 17c0-4 3-6 6-6M79 17l3-3" /><circle cx="81" cy="16" r="1" fill="#fff" />
        <path d="M90 8h3l4-4v13l-4-4h-3zM99 8c1 1 1 4 0 5M101 6c3 3 3 6 0 9M104 5c3 4 3 8 0 11" />
      </svg>
    </Tray>
    <Language><Label w={21}>ENG</Label></Language>
    <Time><Label w={39}>7:39 PM</Label><Label w={49}>11/5/2019</Label></Time>
    <Notify>
      <svg width="26" height="28" viewBox="0 0 26 28">
        <path d="M2 2h15v12H8l-3 4v-4H2z" fill="#fff" /><path d="M5 5h9M5 8h9M5 11h6" stroke="#333" />
        <circle cx="17" cy="16" r="7" fill="#222" stroke="#888" />
        <text x="14" y="20" fill="#fff" fontFamily="Open Sans" fontSize="10">3</text>
      </svg>
    </Notify>
  </Task>
);

const Cell = ({ w, children, ...rest }) => (
  <GridCell {...rest}>{children && <Label w={w}>{children}</Label>}</GridCell>
);

const Pick = () => (
  <svg width="14" height="15"><path d="M0 2l4 1 5-3M2 0l4 5" stroke="#554c3d" fill="none" /><path d="M6 4l6 6-2 .4 1.500 3-1.500.6-1.600-3L6 13z" fill="#fff" stroke="#222" strokeWidth=".7" /></svg>
);

const Dialog = () => (
  <Window>
    <WindowTitle>
      <Icon n="logo" s={14} />
      <Label w={225}>Baseline and Region Parameters - Corridor - 1</Label>
      <Spacer />
      <svg width="12" height="12" stroke="#222" strokeWidth="1.200"><path d="M1.500 1.500l9 9M10.500 1.500l-9 9" /></svg>
    </WindowTitle>
    <DialogTools>
      <SquareButton><svg width="16" height="16" fill="none" stroke="#333"><path d="M2.500 1.500h4v4h-4z" /><path d="M4.500 7v8" strokeDasharray="2 1" /><path d="M8 6h7l-3.500 4z" fill="#222" stroke="none" /></svg></SquareButton>
      <SquareButton><svg width="16" height="16" fill="none" stroke="#333"><path d="M2.500 1.500h4v4h-4zM2.500 9.500h4v4h-4z" /><path d="M8 9h7l-3.500-4z" fill="#222" stroke="none" /></svg></SquareButton>
      <SquareButton $gap={7}><svg width="14" height="14" fill="#fafafa" stroke="#333"><path d="M1.500 1.500h11v11h-11z" /><path d="M4 6.500l2.500 3 4-5" fill="none" strokeWidth="1.500" /></svg></SquareButton>
      <SquareButton $gap={2}><svg width="14" height="14" fill="#f4f4f4" stroke="#555"><path d="M1.500 1.500h11v11h-11z" /></svg></SquareButton>
      <Button $w={133} $gap={23}><Label w={57}>Add Baseline</Label></Button>
      <Button $w={165} $gap={8}><Label w={85}>Set all Frequencies</Label></Button>
      <Button $w={174} $gap={6}><Label w={65}>Set all Targets</Label></Button>
    </DialogTools>
    <Grid>
      <GridHead />
      <GridHead><Label w={41}>Horizo...</Label></GridHead><GridHead><Label w={44}>Vertical...</Label></GridHead>
      <GridHead><Label w={41}>Assem...</Label></GridHead><GridHead><Label w={43}>Start St...</Label></GridHead>
      <GridHead><Label w={45}>End Sta...</Label></GridHead><GridHead><Label w={43}>Freque...</Label></GridHead>
      <GridHead><Label w={30}>Target</Label></GridHead><GridHead><Label w={45}>Overrid...</Label></GridHead>

      <Cell $white $flush w={60}>Sa alig - (13)</Cell><Cell $white w={31}>Sa alig</Cell><Cell $white w={48}>Layout (...</Cell>
      <Cell /><Cell $dim w={47}>0+000.0...</Cell><Cell $dim w={47}>0+252.8...</Cell>
      <GridCell $white $end><Dots /></GridCell><GridCell $white $end><Dots /></GridCell><Cell />

      <GridCell $on $flush>
        <RegionCheck><svg width="6" height="11" fill="none" stroke="#111"><path d="M0 6l2 2 3.500-5" strokeWidth="1.200" /></svg></RegionCheck>
        <Label w={117}>RG - Assembly - 8 - (13)</Label>
      </GridCell>
      <GridCell $on /><GridCell $on /><Cell $on w={46}>Assemb...</Cell>
      <GridCell $on><Label w={33}>0+00...</Label><Spacer /><Pick /></GridCell>
      <GridCell $on><Label w={33}>0+25...</Label><Spacer /><Pick /></GridCell>
      <GridCell $on><Label w={34}>20.00...</Label><Spacer /><Dots /></GridCell>
      <GridCell $on $end><Dots /></GridCell><GridCell $on $end><Dots $inset /></GridCell>

      {Array.from({ length: 9 }, (_, i) => <GridCell key={i} />)}
    </Grid>
    <GridScroll><Chevron $dir="left" $bold /><GridThumb /><Chevron $dir="right" $bold /></GridScroll>
    <DialogOptions>
      <SquareButton><svg width="16" height="16"><path d="M1 3l2-2h9v11l-2 2H1z" fill="#a9b3a3" stroke="#333" /><path d="M2 4h8v9H2z" fill="#7b9175" /><path d="M8 5l6 6-3 .5 2 4-2 .5-1.500-4-2 1.500z" fill="#fff" stroke="#222" strokeWidth=".8" /></svg></SquareButton>
      <Label w={120}>Select region from drawing</Label>
      <Spacer />
      <Label w={76}>Lock Regions To:</Label>
      <Select><Label w={81}>Geometry Locking</Label><Chevron $dir="down" /></Select>
    </DialogOptions>
    <DialogActions>
      <Button $w={72} $primary><Label w={14}>OK</Label></Button>
      <Button $w={72}><Label w={31}>Cancel</Label></Button>
      <Button $w={73}><Label w={26}>Apply</Label></Button>
      <Button $w={72}><Label w={21}>Help</Label></Button>
    </DialogActions>
    <Resize><svg width="12" height="12" stroke="#888"><path d="M1 12L12 1M5 12l7-7M9 12l3-3" /></svg></Resize>
  </Window>
);

const App = () => (
  <Screen>
    <GlobalStyle />
    <Header>
      <AppButton><Icon n="logo" s={29} /><b>C3D</b></AppButton>
      <TitleBar />
      <TabRow>
        {ribbonTabs.map(([name, w], i) => (
          <RibbonTab key={name} $active={i === 0} $context={name === "Geolocation"}><Label w={w}>{name}</Label></RibbonTab>
        ))}
        <Minimise>▲</Minimise><Arrow $s={5} />
      </TabRow>
    </Header>
    <Ribbon />
    <FileTabs>
      <FileTab $w={120}><Label w={23}>Start</Label></FileTab>
      <FileTab $w={122} $active><Label w={42}>newww*</Label><Spacer /><TabClose>×</TabClose></FileTab>
      <NewTab>+</NewTab>
    </FileTabs>
    <Workspace>
      <Toolspace />
      <SideTabs>
        {sideTabs.map(([name, w, h], i) => (
          <SideTab key={name} $h={h} $active={i === 0}><Turned><Label w={w}>{name}</Label></Turned></SideTab>
        ))}
      </SideTabs>
      <Canvas />
      <ToolStrip>
        <Grip />
        {toolIcons.map((n, i) => (n === "|" ? <StripLine key={i} /> : <StripItem key={i}><Icon n={n} s={15} /></StripItem>))}
      </ToolStrip>
    </Workspace>
    <LayoutBar>
      <LayoutTab $w={57} $active><Label w={32}>Model</Label></LayoutTab>
      <LayoutTab $w={60}><Label w={39}>Layout1</Label></LayoutTab>
      <LayoutTab $w={61}><Label w={39}>Layout2</Label></LayoutTab>
      <LayoutTab $w={28}><b>+</b></LayoutTab>
      <Spacer />
      <StatusBar />
    </LayoutBar>
    <Taskbar />
    <Dialog />
    <Pointer width="12" height="18" viewBox="0 0 12 18"><path d="M1 1v13l3-3 3 6 2-1-3-6h5z" fill="#fff" stroke="#222" /></Pointer>
  </Screen>
);
export default App;

const GlobalStyle = createGlobalStyle`
  * {
    box-sizing: border-box;
  }
  body {
    margin: 0;
    overflow: hidden;
    font-family: "Open Sans", "Noto Sans", sans-serif;
    font-size: 11.5px;
    line-height: 14px;
    color: #202020;
  }
`;

const Screen = styled.div`
  position: relative;
  width: 1280px;
  height: 720px;
  display: flex;
  flex-direction: column;
  background: #393939;
  overflow: hidden;
`;
const LabelBox = styled.span`
  display: inline-block;
  flex: none;
  width: ${(p) => p.$w}px;
  white-space: nowrap;
`;
const LabelText = styled.span`
  display: inline-block;
  transform-origin: 0 50%;
`;
const Glyph = styled.svg`
  flex: none;
  width: ${(p) => p.$s}px;
  height: ${(p) => p.$s}px;
  fill: none;
  stroke: currentColor;
`;
const Arrow = styled.span`
  flex: none;
  width: ${(p) => p.$s || 6}px;
  height: ${(p) => ((p.$s || 6) + 1) / 2}px;
  background: #e2e2e2;
  clip-path: polygon(0 0, 100% 0, 50% 100%);
`;
const turns = { down: 45, up: 225, left: 135, right: 315 };
const Chevron = styled.span`
  flex: none;
  width: 6px;
  height: 6px;
  border: solid #444;
  border-width: 0 ${(p) => (p.$bold ? "1.7px 1.7px" : "1px 1px")} 0;
  transform: rotate(${(p) => turns[p.$dir]}deg);
`;
const Spacer = styled.span`
  flex: 1;
`;

const Header = styled.header`
  display: grid;
  grid-template: 23px 19px / 38px 1fr;
  flex: none;
  background: #4b4b4b;
`;
const AppButton = styled.div`
  grid-row: 1 / 3;
  height: 38px;
  width: 37px;
  margin-top: 1px;
  padding-left: 2px;
  display: flex;
  flex-direction: column;
  border: 1px solid #aaa;
  background: linear-gradient(#9a9a9a, #686868);
  b {
    font: 700 8px/6px "Liberation Mono", monospace;
    padding-left: 8px;
  }
  ${Glyph} {
    width: 24px;
    height: 27px;
  }
`;
const bar = css`
  background: linear-gradient(#7d7d7d, #4e4e4e);
  color: #eee;
`;
const TitleRow = styled.div`
  display: flex;
  align-items: stretch;
`;
const Quick = styled.div`
  ${bar}
  width: 163px;
  padding-left: 9px;
  display: flex;
  align-items: center;
  gap: 8.800px;
`;
const QuickPair = styled.span`
  display: flex;
  align-items: center;
  gap: 6px;
  color: ${(p) => (p.$dim ? "#858585" : "#eee")};
`;
const WorkspacePicker = styled.div`
  width: 168px;
  display: flex;
  align-items: center;
  gap: 4px;
  padding: 0 2px 0 4px;
  border: 1px solid #303030;
  background: #5b5b5b;
  color: #eee;
  font-size: 12px;
`;
const QuickMore = styled.div`
  ${bar}
  width: 16px;
  display: flex;
  flex-direction: column;
  align-items: center;
  justify-content: center;
  gap: 2px;
`;
const MoreLine = styled.i`
  width: 7px;
  height: 2px;
  background: #ddd;
`;
const Caption = styled.div`
  width: 324px;
  padding-left: 44px;
  display: flex;
  align-items: center;
  gap: 12px;
  background: #fff;
  height: 22px;
`;
const SearchToggle = styled.div`
  ${bar}
  width: 12px;
  font: 8px/22px "DejaVu Sans", sans-serif;
  text-align: center;
`;
const Search = styled.div`
  width: 169px;
  padding-left: 5px;
  display: flex;
  align-items: center;
  border: 1px solid #333;
  background: #707070;
  color: #c6c6c6;
  font-style: italic;
  font-size: 11px;
`;
const Account = styled.div`
  ${bar}
  width: 237px;
  padding: 0 4px 0 4px;
  display: flex;
  align-items: center;
  gap: 7px;
  ${LabelBox} {
    margin-left: -2px;
  }
`;
const CartGap = styled.span`
  width: 0;
`;
const Divider = styled.i`
  width: 1px;
  height: 16px;
  background: #777;
`;
const WindowButtons = styled.div`
  flex: 1;
  height: 22px;
  padding: 4px 0 0 31px;
  background: #fff;
`;
const TabRow = styled.nav`
  display: flex;
  align-items: center;
  padding-left: 6px;
  color: #ddd;
`;
const RibbonTab = styled.div`
  height: 19px;
  padding: 2px 9px 0 8px;
  margin-right: 1px;
  line-height: 14px;
  ${(p) => p.$active && "background: #6b6b6b; color: #fff; border: 1px solid #858585; border-width: 1px 1px 0; padding: 1px 8px 0 7px;"}
  ${(p) => p.$context && "background: #5c656c; padding: 1px 9px 0 9px; margin-right: 22px; height: 16px;"}
`;
const Minimise = styled.span`
  width: 12px;
  height: 7px;
  margin-right: 6px;
  border-radius: 2px;
  background: #ccc;
  color: #333;
  font: 6px/7px "DejaVu Sans", sans-serif;
  text-align: center;
`;

const RibbonRow = styled.section`
  display: flex;
  flex: none;
  height: 93px;
  padding-left: 2px;
  border-bottom: 1px solid #8b8b8b;
  background: linear-gradient(#555, #393939);
`;
const Panel = styled.div`
  width: ${(p) => p.$w}px;
  display: flex;
  flex-direction: column;
  border-right: 1px solid #454545;
  border-top: 1px solid #444;
  background: #5c5c5c;
  color: #858585;
`;
const PanelBody = styled.div`
  height: 73px;
  display: flex;
  padding-top: 4px;
`;
const PanelTitle = styled.div`
  flex: 1;
  display: flex;
  align-items: center;
  justify-content: center;
  gap: 7px;
  padding-bottom: 1px;
  background: linear-gradient(#545454, #474747);
  color: #e6e6e6;
`;
const BigPalette = styled.div`
  width: 53px;
  height: 66px;
  margin: 0 2px;
  padding: 1px 0 0 10px;
  border: 1px solid #465569;
  background: linear-gradient(#7190b9, #5c7698 65%, #465f85);
`;
const PaletteGrid = styled.div`
  display: grid;
  grid-template-columns: 22px 22px;
  grid-auto-rows: 20px;
  row-gap: 2px;
`;
const PaletteButton = styled.div`
  display: flex;
  align-items: center;
  justify-content: center;
  color: #a5aeb7;
  ${(p) => p.$on && "background: linear-gradient(#6b88aa, #526d92); border: 1px solid #3f5370;"}
`;
const ToolStack = styled.div`
  padding-left: ${(p) => p.$x}px;
`;
const ToolRow = styled.div`
  height: 22.3px;
  display: flex;
  align-items: center;
  gap: 6px;
  color: #808080;
  ${LabelBox} {
    margin-top: -1px;
  }
`;
const ThreeColumns = styled.div`
  display: grid;
  grid-template-columns: 99px 95px 107px;
`;
const IconStack = styled.div`
  width: ${(p) => p.$w}px;
`;
const IconRow = styled.div`
  height: 22.3px;
  display: flex;
  align-items: center;
  gap: 6px;
`;
const DrawTools = styled.div`
  display: flex;
  padding-left: 5px;
  color: #989898;
`;
const ModifyTools = styled.div`
  display: grid;
  grid-template-columns: 72px 28px 38px 20px;
  color: #939393;
`;
const BigTool = styled.div`
  width: ${(p) => p.$w}px;
  display: flex;
  flex-direction: column;
  align-items: center;
  padding-top: 1px;
  ${Glyph} {
    margin-bottom: 6px;
    color: #969696;
  }
  ${Arrow} {
    margin-top: 3px;
  }
`;
const LayerTools = styled.div`
  display: flex;
  flex-direction: column;
`;
const LayerPicker = styled.div`
  width: 195px;
  height: 20px;
  display: flex;
  align-items: center;
  gap: 6px;
  padding: 0 2px 0 5px;
  border: 1px solid #3e3e3e;
  background: #606060;
`;
const LayerGrid = styled.div`
  display: grid;
  grid-template-columns: repeat(5, 22px);
  grid-auto-rows: 22px;
  align-items: center;
  padding: 2px 0 0 5px;
  color: #a0a0a0;
`;

const FileTabs = styled.div`
  height: 23px;
  flex: none;
  display: flex;
  align-items: flex-end;
  padding-left: 16px;
  background: #393939;
`;
const FileTab = styled.div`
  width: ${(p) => p.$w}px;
  height: 20px;
  display: flex;
  align-items: center;
  padding: 1px 18px 0 ${(p) => (p.$active ? 9 : 14)}px;
  color: ${(p) => (p.$active ? "#f2f2f2" : "#b5b5b5")};
  background: ${(p) => (p.$active ? "linear-gradient(#777, #5b5b5b)" : "#525252")};
  clip-path: polygon(7px 0, calc(100% - 9px) 0, 100% 100%, 0 100%);
`;
const TabClose = styled.span`
  color: #999;
  font-size: 14px;
`;
const NewTab = styled.div`
  width: 21px;
  height: 15px;
  margin: 0 0 2px 0;
  background: #4e4e4e;
  color: #ddd;
  text-align: center;
  clip-path: polygon(0 0, 70% 0, 100% 50%, 100% 100%, 30% 100%);
`;

const Workspace = styled.main`
  display: flex;
  flex: none;
  height: 497px;
  background: #5b5b5b;
`;
const Space = styled.aside`
  width: 208px;
  padding: 4px 1px 0;
  display: flex;
  flex-direction: column;
`;
const SpaceTitle = styled.div`
  height: 21px;
  padding: 3px 13px;
  background: #535353;
  color: #eee;
`;
const SpaceTools = styled.div`
  height: 29px;
  display: flex;
  align-items: center;
  gap: 12px;
  padding: 0 5px 2px;
  color: #ddd;
`;
const HelpBox = styled.span`
  width: 14px;
  height: 14px;
  margin-right: -1px;
  background: #eee;
  color: #222;
  font-weight: 700;
  text-align: center;
`;
const ViewPicker = styled.div`
  height: 19px;
  flex: none;
  display: flex;
  align-items: center;
  justify-content: space-between;
  padding: 0 5px 2px 2px;
  background: #e2e2e2;
`;
const Tree = styled.div`
  height: 324px;
  flex: none;
  margin-top: 2px;
  background: #fff;
  border-top: 1px solid #888;
`;
const TreeTop = styled.div`
  height: 307px;
  display: flex;
  padding-top: 1px;
`;
const TreeList = styled.div`
  width: 189px;
  height: 306px;
  padding-left: 8px;
  overflow: hidden;
`;
const Toggle = styled.span`
  width: 9px;
  height: 9px;
  flex: none;
  border: 1px solid #777;
  background: #fff;
  color: #111;
  font: 700 9px/7px "Liberation Sans", sans-serif;
  text-align: center;
`;
const RootRow = styled.div`
  height: 19px;
  display: flex;
  align-items: center;
  gap: 6px;
  color: #333;
  font-weight: 700;
  ${LabelBox} {
    margin-left: -1px;
    color: #111;
  }
`;
const TreeBranches = styled.div`
  margin-left: 4px;
  border-left: 1px dotted #888;
`;
const Branch = styled.span`
  width: 10px;
  height: 100%;
  display: flex;
  align-items: center;
  border-left: 1px dotted #888;
  ${Toggle} {
    margin-left: -5px;
  }
`;
const TreeRow = styled.div`
  height: 18.740px;
  display: flex;
  align-items: center;
  padding-left: ${(p) => (p.$deep ? 35 : 17)}px;
  color: #444;
`;
const TreeText = styled.span`
  margin-left: ${(p) => (p.$deep ? 4.500 : 5)}px;
  padding: 0 2px 2px;
  color: #181818;
  ${(p) => p.$active && "flex: 1; padding: 1px 2px 2px; background: #9b9b9b;"}
`;
const VScroll = styled.div`
  width: 15px;
  display: flex;
  flex-direction: column;
  align-items: center;
  padding: 7px 0 7px;
  background: #f1f1f1;
`;
const VThumb = styled.div`
  width: 14px;
  height: 181px;
  margin-top: 3px;
  background: #c6c6c6;
`;
const TreeBottom = styled.div`
  height: 15px;
  display: flex;
  align-items: center;
  justify-content: space-between;
  padding: 0 21px 3px 7px;
  background: #f1f1f1;
`;
const HThumb = styled.div`
  width: 130px;
  height: 14px;
  margin-right: 26px;
  background: #c6c6c6;
`;
const ItemTable = styled.div`
  height: 86px;
  flex: none;
  margin-top: 7px;
  display: grid;
  grid-template: 25px 19px 19px 18px 1fr / 94px 94px 1fr;
  background: #fff;
`;
const ItemHead = styled.div`
  padding: 5px 0 0 6px;
  border-right: 1px solid #efdcdc;
  border-bottom: 1px solid #777;
`;
const ItemCell = styled.div`
  display: flex;
  align-items: center;
  gap: 4px;
  overflow: hidden;
  padding-left: 1px;
  padding-bottom: 2px;
  border-right: 1px solid #e9cdc7;
  border-bottom: 1px solid #aaa;
  background: ${(p) => (p.$gray ? "#eee" : p.$cream ? "#ffffea" : "#fff")};
`;
const NameClip = styled.span`
  width: 69px;
  overflow: hidden;
`;
const SideTabs = styled.div`
  width: 22px;
  padding-top: 27px;
  background: #5b5b5b;
`;
const SideTab = styled.div`
  width: 19px;
  height: ${(p) => p.$h}px;
  display: flex;
  align-items: center;
  justify-content: center;
  padding: 0 0 2px 2px;
  border: 1px solid #343434;
  border-left: 0;
  border-radius: 0 4px 4px 0;
  background: ${(p) => (p.$active ? "#5b5b5b" : "#4f4f4f")};
  color: ${(p) => (p.$active ? "#eee" : "#aaa")};
`;
const Turned = styled.span`
  transform: rotate(-90deg);
`;

const Drawing = styled.section`
  position: relative;
  width: 1020px;
  margin-top: 4px;
  background: #20272f;
  overflow: hidden;
`;
const ViewLabel = styled.div`
  padding: 7px 2px;
  color: #b9bcc0;
  font-size: 12px;
  letter-spacing: -0.1px;
`;
const ViewControls = styled.div`
  position: absolute;
  right: 9px;
  top: 9px;
`;
const Cube = styled.div`
  position: absolute;
  left: 915px;
  top: 33px;
`;
const Wcs = styled.div`
  position: absolute;
  left: 938px;
  top: 141px;
  width: 46px;
  height: 17px;
  padding: 1px 4px;
  border: 1px solid #858990;
  border-radius: 3px;
  background: #989ba1;
  color: #5b5f66;
  font: 11px/13px "Liberation Sans", sans-serif;
`;
const NavBar = styled.div`
  position: absolute;
  left: 986px;
  top: 181px;
  width: 30px;
  height: 200px;
  border-radius: 3px;
  background: #666b73;
`;
const Contour = styled.div`
  position: absolute;
  left: 424px;
  top: 406px;
`;
const Ucs = styled.div`
  position: absolute;
  left: 5px;
  top: 412px;
`;
const ToolStrip = styled.div`
  width: 24px;
  margin: 4px 0 0 3px;
  display: flex;
  flex-direction: column;
  align-items: center;
  border: 1px solid #414141;
  border-width: 0 1px;
  background: #555;
  color: #cbd0d2;
  overflow: hidden;
`;
const Grip = styled.div`
  width: 13px;
  height: 4px;
  flex: none;
  margin: 2px 0;
  background: repeating-linear-gradient(90deg, #333 0 1px, #666 1px 3px);
`;
const StripItem = styled.div`
  flex: none;
  height: 20.600px;
  display: flex;
  align-items: center;
`;
const StripLine = styled.i`
  flex: none;
  width: 18px;
  height: 2px;
  margin: 3px 0 1.500px;
  background: #ddd;
`;

const LayoutBar = styled.div`
  height: 27px;
  flex: none;
  display: flex;
  padding-left: 9px;
  border-top: 1px solid #555;
  background: #393939;
`;
const LayoutTab = styled.div`
  width: ${(p) => p.$w}px;
  height: 16px;
  padding-top: 1px;
  text-align: center;
  color: ${(p) => (p.$active ? "#fff" : "#b3b3b3")};
  font-weight: ${(p) => (p.$active ? 700 : 400)};
  background: ${(p) => (p.$active ? "linear-gradient(#626262, #748477)" : "#515151")};
  clip-path: polygon(0 0, 100% 0, calc(100% - 8px) 100%, 8px 100%);
`;
const Status = styled.div`
  display: flex;
  gap: 1px;
  width: 633px;
  padding-right: 1px;
`;
const StatusBox = styled.div`
  width: ${(p) => p.$w}px;
  height: 25px;
  display: flex;
  align-items: center;
  justify-content: space-around;
  padding: 0 0 2px ${(p) => p.$x || 0}px;
  border: 1px solid #747474;
  background: #4d4d4d;
  color: ${(p) => (p.$dim ? "#929292" : "#bdbdbd")};
  ${LabelBox} {
    color: #eee;
    font-size: 12px;
  }
`;
const Blue = styled.span`
  display: flex;
  color: #3185ce;
`;
const Task = styled.footer`
  height: 38px;
  flex: none;
  display: flex;
  align-items: center;
  background: #1c1c1c;
  color: #f1f1f1;
`;
const TaskItem = styled.div`
  width: 45.9px;
  height: 38px;
  display: flex;
  align-items: center;
  justify-content: center;
  background: ${(p) => (p.$active ? "#4b4b4b" : "transparent")};
  ${(p) => p.$open && "background: linear-gradient(#2b3947, #2b3947) center bottom / 36px 2px no-repeat;"}
`;
const Tray = styled.div`
  width: 114px;
  height: 20px;
`;
const Language = styled.div`
  width: 33px;
`;
const Time = styled.div`
  width: 49px;
  display: flex;
  flex-direction: column;
  align-items: center;
  padding-bottom: 2px;
  line-height: 17px;
`;
const Notify = styled.div`
  width: 52px;
  height: 38px;
  padding: 8px 0 0 14px;
  margin-right: 3px;
  border-right: 1px solid #555;
`;

const Window = styled.div`
  position: absolute;
  left: 305px;
  top: 122px;
  width: 626px;
  height: 447px;
  display: flex;
  flex-direction: column;
  background: #f0f0f0;
  border-right: 1px solid #555;
  box-shadow: 0 2px 8px rgba(0, 0, 0, 0.5);
`;
const WindowTitle = styled.div`
  height: 28px;
  display: flex;
  align-items: center;
  gap: 5px;
  padding: 0 8px 2px 7px;
  background: #fff;
`;
const Button = styled.div`
  width: ${(p) => p.$w}px;
  height: 20px;
  display: flex;
  align-items: center;
  justify-content: center;
  margin-left: ${(p) => p.$gap || 0}px;
  border: ${(p) => (p.$primary ? "2px solid #2675b5" : "1px solid #acacac")};
  background: #e2e2e2;
`;
const DialogTools = styled.div`
  display: flex;
  padding: 13px 0 0 11px;
  height: 43px;
  ${Button} {
    padding-right: 3px;
  }
`;
const SquareButton = styled.div`
  width: 21px;
  height: 20px;
  flex: none;
  display: flex;
  align-items: center;
  justify-content: center;
  margin-left: ${(p) => p.$gap || 1}px;
  border: 1px solid #a8a8a8;
  background: #e6e6e6;
  &:first-child {
    margin-left: 0;
  }
`;
const Grid = styled.div`
  width: 602px;
  height: 291px;
  margin-left: 11px;
  display: grid;
  grid-template: 21px 18px 19px 1fr / 149px 56px 56px 57px 56px 56px 56px 56px 1fr;
  border: 1px solid #888;
  border-bottom: 2px solid #a2a2a0;
  background: #fff;
`;
const GridHead = styled.div`
  padding: 2px 0 0 6px;
  border-right: 1px solid #e6e6e6;
  border-bottom: 2px solid #aaa;
`;
const GridCell = styled.div`
  min-width: 0;
  overflow: hidden;
  display: flex;
  align-items: center;
  justify-content: ${(p) => (p.$end ? "flex-end" : "flex-start")};
  padding: 0 1px ${(p) => (p.$on ? 1 : 0)}px ${(p) => (p.$flush ? 0 : 3)}px;
  border-right: 1px solid #e5c9bf;
  background: ${(p) => (p.$on ? "#0874cf" : p.$white ? "#fff" : "#ffffed")};
  color: ${(p) => (p.$on ? "#d9eaff" : p.$dim ? "#858585" : "#202020")};
`;
const RegionCheck = styled.span`
  width: 7px;
  height: 13px;
  display: flex;
  margin-right: 5px;
  border: 1px solid #333;
  border-left: 0;
  background: #fff;
`;
const Dots = styled.i`
  width: 14px;
  height: 14px;
  flex: none;
  margin-right: ${(p) => (p.$inset ? 2 : 0)}px;
  border: 1px solid #666;
  background: radial-gradient(circle at 3px 6px, #222 0 0.8px, transparent 1.4px),
    linear-gradient(#c3c6c9, #c3c6c9) 5px 5px / 6px 3px no-repeat, #e4e4e4;
`;
const GridScroll = styled.div`
  width: 602px;
  height: 16px;
  margin-left: 11px;
  display: flex;
  align-items: center;
  padding: 0 6px;
`;
const GridThumb = styled.div`
  width: 487px;
  height: 14px;
  margin: 0 4px 0 87px;
  background: #676767;
`;
const DialogOptions = styled.div`
  height: 28px;
  display: flex;
  align-items: center;
  gap: 6px;
  padding: 8px 12px 0 11px;
  ${LabelBox} {
    margin-top: -1px;
  }
`;
const Select = styled.div`
  width: 151px;
  height: 20px;
  display: flex;
  align-items: center;
  justify-content: space-between;
  padding: 3px 5px 0 2px;
  border: 1px solid #aaa;
  background: #e2e2e2;
  ${Chevron} {
    margin-top: -5px;
  }
`;
const DialogActions = styled.div`
  display: flex;
  justify-content: flex-end;
  gap: 6px;
  padding: 10px 12px 0;
`;
const Resize = styled.div`
  position: absolute;
  right: 0;
  bottom: 0;
  height: 12px;
`;
const Pointer = styled.svg`
  position: absolute;
  left: 882px;
  top: 431px;
`;
